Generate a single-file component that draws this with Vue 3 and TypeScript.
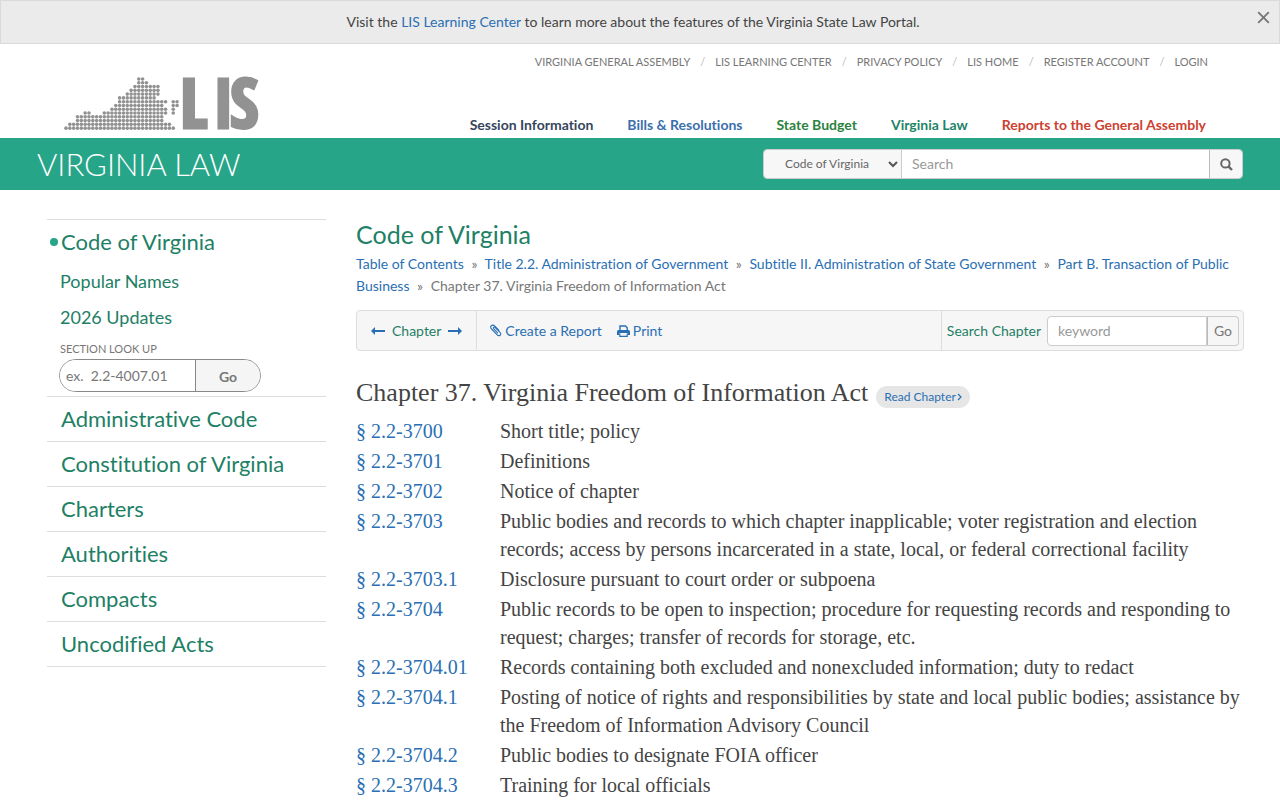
<script setup lang="ts">
import { ref } from 'vue'

interface Item { label: string; tone?: string }
interface Section { num: string; title: string }

const utilityLinks: string[] = [
  'Virginia General Assembly', 'LIS Learning Center', 'Privacy Policy',
  'LIS Home', 'Register Account', 'Login',
]

const mainLinks: Item[] = [
  { label: 'Session Information', tone: 'navy' },
  { label: 'Bills & Resolutions', tone: 'blue' },
  { label: 'State Budget', tone: 'green' },
  { label: 'Virginia Law', tone: 'teal' },
  { label: 'Reports to the General Assembly', tone: 'red' },
]

const collections: string[] = [
  'Administrative Code', 'Constitution of Virginia', 'Charters',
  'Authorities', 'Compacts', 'Uncodified Acts',
]

const crumbs: string[] = [
  'Table of Contents',
  'Title 2.2. Administration of Government',
  'Subtitle II. Administration of State Government',
  'Part B. Transaction of Public Business',
]

const sections: Section[] = [
  { num: '2.2-3700', title: 'Short title; policy' },
  { num: '2.2-3701', title: 'Definitions' },
  { num: '2.2-3702', title: 'Notice of chapter' },
  { num: '2.2-3703', title: 'Public bodies and records to which chapter inapplicable; voter registration and election records; access by persons incarcerated in a state, local, or federal correctional facility' },
  { num: '2.2-3703.1', title: 'Disclosure pursuant to court order or subpoena' },
  { num: '2.2-3704', title: 'Public records to be open to inspection; procedure for requesting records and responding to request; charges; transfer of records for storage, etc.' },
  { num: '2.2-3704.01', title: 'Records containing both excluded and nonexcluded information; duty to redact' },
  { num: '2.2-3704.1', title: 'Posting of notice of rights and responsibilities by state and local public bodies; assistance by the Freedom of Information Advisory Council' },
  { num: '2.2-3704.2', title: 'Public bodies to designate FOIA officer' },
  { num: '2.2-3704.3', title: 'Training for local officials' },
]

// Runs of dots per row of the state map: [first column, last column]
const mapRows: number[][][] = [
  [[19, 20]],
  [[19, 21]],
  [[18, 24]],
  [[17, 24]],
  [[16, 24]],
  [[14, 23]],
  [[14, 26], [28, 29]],
  [[13, 25], [28, 29]],
  [[12, 26], [28, 28]],
  [[5, 6], [10, 26], [28, 28]],
  [[3, 25]],
  [[3, 25]],
  [[1, 27]],
  [[0, 28]],
]
const dots = mapRows.flatMap((runs, row) =>
  runs.flatMap(([from, to]) =>
    Array.from({ length: to - from + 1 }, (_, i) => ({ x: 2 + (from + i) * 3.83, y: 3 + row * 3.78 })),
  ),
)

const showNotice = ref(true)
const source = ref('Code of Virginia')
</script>

<template>
  <div class="page">
    <div v-if="showNotice" class="notice">
      <p>Visit the <a href="#">LIS Learning Center</a> to learn more about the features of the Virginia State Law Portal.</p>
      <button type="button" class="close" aria-label="Close" @click="showNotice = false">
        <svg width="13" height="13" viewBox="0 0 13 13"><path d="M1.200 1.200l10.600 10.600M11.800 1.200L1.200 11.800" stroke="#777" stroke-width="1.900" /></svg>
      </button>
    </div>

    <header class="header">
      <a href="#" class="logo" aria-label="LIS">
        <svg width="204" height="60" viewBox="0 0 204 60" fill="#929292">
          <circle v-for="(d, i) in dots" :key="i" :cx="d.x" :cy="d.y" r="1.800" />
          <text x="116 149 166" y="52" class="logo-text">LIS</text>
        </svg>
      </a>
      <div class="navs">
        <nav class="utility">
          <template v-for="(l, i) in utilityLinks" :key="l">
            <span v-if="i" class="slash">/</span>
            <a href="#">{{ l }}</a>
          </template>
        </nav>
        <nav class="primary">
          <a v-for="l in mainLinks" :key="l.label" href="#" :class="l.tone">{{ l.label }}</a>
        </nav>
      </div>
    </header>

    <div class="bar">
      <a href="#" class="brand">VIRGINIA LAW</a>
      <form class="search" @submit.prevent>
        <select v-model="source" aria-label="Search in">
          <option>Code of Virginia</option>
          <option>Administrative Code</option>
        </select>
        <svg class="chevron" width="10" height="7" viewBox="0 0 10 7"><path d="M1 1l4 4 4-4" fill="none" stroke="#555" stroke-width="2" /></svg>
        <input type="text" placeholder="Search" aria-label="Search text">
        <button type="submit" aria-label="Search">
          <svg width="13" height="13" viewBox="0 0 13 13" fill="none" stroke="#666"><circle cx="5.400" cy="5.400" r="4.200" stroke-width="2" /><path d="M8.400 8.400l3.600 3.600" stroke-width="2.400" /></svg>
        </button>
      </form>
    </div>

    <div class="body">
      <aside class="side">
        <div class="group">
          <a href="#" class="top current">Code of Virginia</a>
          <a href="#" class="sub">Popular Names</a>
          <a href="#" class="sub">2026 Updates</a>
          <form class="lookup" @submit.prevent>
            <label for="lookup">SECTION LOOK UP</label>
            <div class="pill">
              <input id="lookup" type="text" placeholder="ex.  2.2-4007.01">
              <button type="submit">Go</button>
            </div>
          </form>
        </div>
        <div v-for="c in collections" :key="c" class="group">
          <a href="#" class="top">{{ c }}</a>
        </div>
      </aside>

      <main>
        <h1>Code of Virginia</h1>
        <p class="crumbs">
          <template v-for="c in crumbs" :key="c"><a href="#">{{ c }}</a> <span class="sep">»</span> {{ '' }}</template>Chapter 37. Virginia Freedom of Information Act
        </p>

        <div class="tools">
          <div class="pager">
            <a href="#" aria-label="Previous chapter"><svg width="14" height="8" viewBox="0 0 14 8"><path d="M0 4l4-4v3h10v2H4v3z" fill="#2a6fb3" /></svg></a>
            <span>Chapter</span>
            <a href="#" aria-label="Next chapter"><svg width="14" height="8" viewBox="0 0 14 8"><path d="M14 4l-4-4v3H0v2h10v3z" fill="#2a6fb3" /></svg></a>
          </div>
          <div class="actions">
            <a href="#">
              <svg width="12" height="13" viewBox="0 0 12 13"><path d="M8.800 6.200L4.600 2C3.500.9 2 .9 1.200 1.800S.6 4 1.600 5l5.600 5.800c.9.9 2 1.100 2.900.4s.8-1.900-.1-2.900L5.200 3.500c-.6-.6-1.200-.6-1.600-.2s-.4 1 .2 1.600L7.600 8.800" fill="none" stroke="#2a6fb3" stroke-width="1.100" stroke-linecap="round" /></svg>
              Create a Report
            </a>
            <a href="#">
              <svg width="13" height="12" viewBox="0 0 13 12"><path d="M3 5.500V1h5.500L10.200 2.700v2.800" fill="none" stroke="#2a6fb3" stroke-width="1.400" /><path d="M1.500 5h10A1.500 1.500 0 0 1 13 6.500V10h-2.300V8H2.300v2H0V6.500A1.500 1.500 0 0 1 1.500 5z" fill="#2a6fb3" /><path d="M2.800 8.400v2.900h7.400V8.400" fill="none" stroke="#2a6fb3" stroke-width="1.200" /></svg>
              Print
            </a>
          </div>
          <form class="find" @submit.prevent>
            <label for="keyword">Search Chapter</label>
            <input id="keyword" type="text" placeholder="keyword">
            <button type="submit">Go</button>
          </form>
        </div>

        <div class="heading">
          <h2>Chapter 37. Virginia Freedom of Information Act</h2>
          <a href="#" class="read">Read Chapter<svg width="5" height="8" viewBox="0 0 5 8"><path d="M1 1l3 3-3 3" fill="none" stroke="#2a6fb3" stroke-width="1.200" /></svg></a>
        </div>

        <dl class="sections">
          <div v-for="s in sections" :key="s.num">
            <dt><a href="#">§ {{ s.num }}</a></dt>
            <dd>{{ s.title }}</dd>
          </div>
        </dl>
      </main>
    </div>
  </div>
</template>

<style>
body { margin: 0; background: #fff; }
</style>

<style scoped>
* { box-sizing: border-box; }
.page {
  height: 100vh;
  overflow: hidden;
  font: 14px/22px Lato, "Open Sans", sans-serif;
  font-variant-ligatures: none;
  color: #444;
}
a { color: #2a6fb3; text-decoration: none; }
p, h1, h2, dl, dd { margin: 0; }
input, select, button { font: inherit; color: inherit; margin: 0; border: 0; outline: 0; border-radius: 0; }
button { padding: 0; cursor: pointer; }
input { min-width: 0; }
input::placeholder { color: #999; opacity: 1; }

.notice {
  display: flex;
  justify-content: center;
  position: relative;
  padding: 10px 50px 10px 36px;
  border: 1px solid #dadada;
  background: #ebebeb;
}
.close {
  position: absolute;
  top: 8px;
  right: 9px;
  width: 13px;
  height: 16px;
  display: grid;
  place-items: center;
  background: none;
}

.header {
  display: flex;
  justify-content: space-between;
  height: 94px;
  padding: 0 72px 0 64px;
}
.logo { margin-top: 32px; }
.logo svg { display: block; overflow: visible; }
.logo-text {
  font: bold 69px "Liberation Sans Narrow", "Open Sans Condensed", sans-serif;
  stroke: #929292;
  stroke-width: 3px;
}
.navs {
  display: flex;
  flex-direction: column;
  justify-content: space-between;
  align-items: flex-end;
  padding: 7px 0 2px;
}
.utility { display: flex; gap: 10px; font-size: 11px; text-transform: uppercase; }
.utility a { color: #777; }
.slash { color: #bbb; }
.primary { display: flex; gap: 34px; padding-right: 2px; font-weight: 700; }
.navy { color: #36455c; }
.blue { color: #3b6fae; }
.green { color: #2c8240; }
.teal { color: #1f8468; }
.red { color: #cc4130; }

.bar {
  display: flex;
  align-items: center;
  justify-content: space-between;
  height: 52px;
  padding: 0 37px;
  background: #26a589;
}
.brand { color: #fff; font-size: 31px; font-weight: 300; line-height: 52px; }
.search { display: flex; position: relative; width: 480px; height: 30px; border: 1px solid #ccc; border-radius: 4px; overflow: hidden; }
.search select {
  width: 138px;
  padding: 0 21px;
  appearance: none;
  background: #f7f7f7;
  border-right: 1px solid #ccc;
  color: #666;
  font-size: 12px;
}
.chevron { position: absolute; left: 124px; top: 11px; pointer-events: none; }
.search input { flex: 1; padding: 0 10px; background: #fff; }
.search button { display: grid; place-items: center; width: 33px; background: #f7f7f7; border-left: 1px solid #bbb; }

.body {
  display: grid;
  grid-template-columns: 279px minmax(0, 1fr);
  gap: 30px;
  padding: 29px 36px 0 47px;
}
.side { border-bottom: 1px solid #ddd; align-self: start; }
.group { border-top: 1px solid #ddd; }
.side a { display: block; color: #1e8065; }
.side .top { padding-left: 14px; font-size: 22px; line-height: 44px; }
.side .current { position: relative; line-height: 43px; }
.current::before {
  content: "";
  position: absolute;
  left: 3px;
  top: 18px;
  width: 8px;
  height: 8px;
  border-radius: 50%;
  background: #26a589;
}
.sub { padding-left: 13px; font-size: 18px; line-height: 36px; }
.lookup { padding: 4px 12px; }
.lookup label { display: block; padding-left: 1px; font-size: 11px; line-height: 20px; color: #777; }
.pill {
  display: flex;
  width: 202px;
  height: 33px;
  border: 1px solid #888;
  border-radius: 17px;
  overflow: hidden;
}
.pill input { flex: 1; padding: 0 6px; }
.pill input::placeholder { color: #777; }
.pill button { width: 65px; padding-top: 2px; border-left: 1px solid #888; background: #f5f5f5; font-weight: 700; color: #777; }

h1 { padding-bottom: 4px; font-size: 25px; font-weight: 400; line-height: 30px; color: #1e8065; }
.crumbs { color: #777; }
.sep { margin: 0 4px; }
.tools {
  display: flex;
  margin-top: 13px;
  height: 41px;
  border: 1px solid #ddd;
  border-radius: 4px;
  background: #f6f6f6;
  line-height: 38px;
}
.tools svg { display: block; }
.pager { display: flex; align-items: center; gap: 7px; padding: 0 14px; border-right: 1px solid #ddd; color: #1e8065; }
.actions { display: flex; flex: 1; gap: 15px; padding-left: 13px; }
.actions a { display: flex; align-items: center; gap: 3px; }
.find { display: flex; align-items: center; padding: 0 4px 0 5px; border-left: 1px solid #ddd; }
.find label { margin-right: 6px; color: #1e8065; }
.find input { width: 160px; height: 30px; padding: 0 10px; border: 1px solid #ccc; border-radius: 4px 0 0 4px; }
.find button { width: 32px; height: 30px; border: 1px solid #ccc; border-left-color: #bbb; border-radius: 0 4px 4px 0; background: #f6f6f6; color: #777; line-height: 28px; }

.heading { display: flex; align-items: center; gap: 8px; margin-top: 26px; }
h2 { font: 400 26px/32px "Liberation Serif", serif; }
.read {
  display: flex;
  align-items: center;
  gap: 1px;
  margin-top: 8px;
  padding: 0 8px;
  border-radius: 11px;
  background: #e6e6e6;
  font-size: 12px;
}
.sections { margin-top: 8px; font: 20px/28px "Liberation Serif", serif; }
.sections div { display: grid; grid-template-columns: 144px minmax(0, 1fr); margin-bottom: 2px; }
</style>
